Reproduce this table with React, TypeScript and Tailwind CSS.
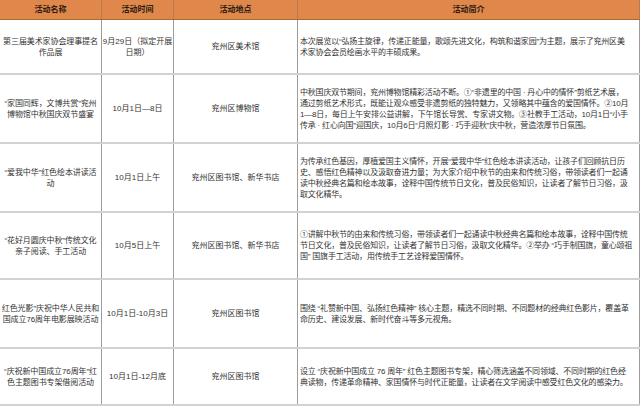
import React from "react";

type Row = {
  name: string[];
  time: string[];
  place: string;
  desc: string[];
  h: string;
};

const rows: Row[] = [
  {
    name: ["第三届美术家协会理事提名", "作品展"],
    time: ["9月29日（拟定开展", "日期）"],
    place: "兖州区美术馆",
    desc: [
      "本次展览以“弘扬主旋律，传递正能量，歌颂先进文化，构筑和谐家园”为主题，展示了兖州区美",
      "术家协会会员绘画水平的丰硕成果。",
    ],
    h: "h-[55px]",
  },
  {
    name: ["“家国同辉，文博共赏”兖州", "博物馆中秋国庆双节盛宴"],
    time: ["10月1日—8日"],
    place: "兖州区博物馆",
    desc: [
      "中秋国庆双节期间，兖州博物馆精彩活动不断。①“非遗里的中国 · 丹心中的情怀”剪纸艺术展，",
      "通过剪纸艺术形式，既能让观众感受非遗剪纸的独特魅力，又领略其中蕴含的爱国情怀。②10月",
      "1—8日，每日上午安排公益讲解，下午馆长导赏、专家讲文物。③社教手工活动，10月1日“小手",
      "传承 · 红心向国”迎国庆，10月6日“月照灯影 · 巧手迎秋”庆中秋，营造浓厚节日氛围。",
    ],
    h: "h-[69px]",
  },
  {
    name: ["“爱我中华”红色绘本讲读活", "动"],
    time: ["10月1日上午"],
    place: "兖州区图书馆、新华书店",
    desc: [
      "为传承红色基因，厚植爱国主义情怀，开展“爱我中华”红色绘本讲读活动，让孩子们回顾抗日历",
      "史、感悟红色精神以及汲取奋进力量；为大家介绍中秋节的由来和传统习俗，带领读者们一起诵",
      "读中秋经典名篇和绘本故事，诠释中国传统节日文化，普及民俗知识，让读者了解节日习俗，汲",
      "取文化精华。",
    ],
    h: "h-[69px]",
  },
  {
    name: ["“花好月圆庆中秋”传统文化", "亲子阅读、手工活动"],
    time: ["10月5日上午"],
    place: "兖州区图书馆、新华书店",
    desc: [
      "①讲解中秋节的由来和传统习俗，带领读者们一起诵读中秋经典名篇和绘本故事，诠释中国传统",
      "节日文化，普及民俗知识，让读者了解节日习俗，汲取文化精华。②举办 “巧手制国旗，童心颂祖",
      "国” 国旗手工活动，用传统手工艺诠释爱国情怀。",
    ],
    h: "h-[67px]",
  },
  {
    name: ["红色光影”庆祝中华人民共和", "国成立76周年电影展映活动"],
    time: ["10月1日-10月3日"],
    place: "兖州区图书馆",
    desc: [
      "围绕 “礼赞新中国、弘扬红色精神” 核心主题，精选不同时期、不同题材的经典红色影片，覆盖革",
      "命历史、建设发展、新时代奋斗等多元视角。",
    ],
    h: "h-[69px]",
  },
  {
    name: ["“庆祝新中国成立76周年”红", "色主题图书专架借阅活动"],
    time: ["10月1日-12月底"],
    place: "兖州区图书馆",
    desc: [
      "设立 “庆祝新中国成立 76 周年” 红色主题图书专架，精心筛选涵盖不同领域、不同时期的红色经",
      "典读物，传递革命精神、家国情怀与时代正能量，让读者在文学阅读中感受红色文化的感染力。",
    ],
    h: "h-[57px]",
  },
];

const grid = "grid grid-cols-[102px_72px_124px_342px]";
const cell = "border-r border-[#9c9c9c] flex flex-col justify-center overflow-hidden";

export default function App() {
  return (
    <div
      className="w-[640px] h-[407px] bg-white overflow-hidden text-[8px] leading-[11px] text-[#333]"
      style={{ fontFamily: '"Liberation Sans", "Noto Sans CJK SC", sans-serif' }}
    >
      {/* header */}
      <div className={`${grid} h-[20px] bg-[#e0874b] border-b border-[#b0682f] font-bold text-[#2b1d12]`}>
        <div className={`${cell} items-center border-[#b87a4a]`}>活动名称</div>
        <div className={`${cell} items-center border-[#b87a4a]`}>活动时间</div>
        <div className={`${cell} items-center border-[#b87a4a]`}>活动地点</div>
        <div className={`${cell} items-center border-[#b87a4a]`}>活动简介</div>
      </div>

      {rows.map((r, i) => (
        <div key={i} className={`${grid} ${r.h} border-b-2 border-[#d2d2d2]`}>
          <div className={`${cell} items-center text-center whitespace-nowrap tracking-[-0.1px]`}>
            {r.name.map((l, j) => (
              <span key={j}>{l}</span>
            ))}
          </div>
          <div className={`${cell} items-center text-center whitespace-nowrap`}>
            {r.time.map((l, j) => (
              <span key={j}>{l}</span>
            ))}
          </div>
          <div className={`${cell} items-center text-center px-[2px]`}>{r.place}</div>
          <div className={`${cell} pl-[2px] whitespace-nowrap tracking-[-0.2px]`}>
            {r.desc.map((l, j) => (
              <span key={j}>{l}</span>
            ))}
          </div>
        </div>
      ))}
    </div>
  );
}
